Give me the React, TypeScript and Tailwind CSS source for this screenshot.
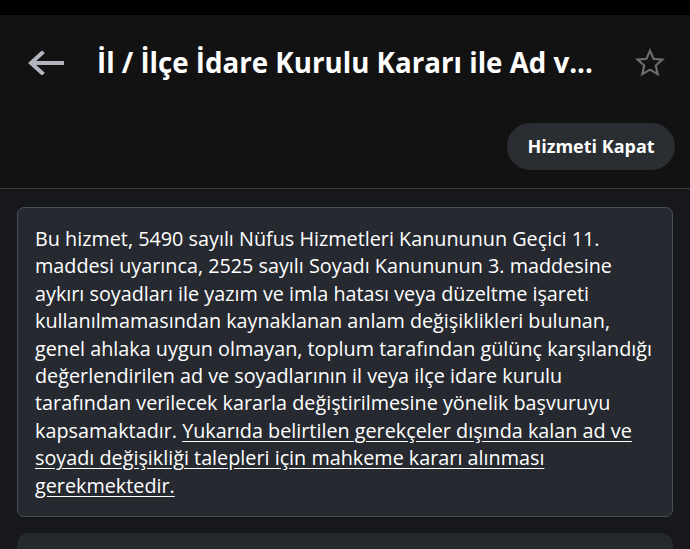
import React from "react";

const lines: { t: string; u?: string }[] = [
  { t: "Bu hizmet, 5490 sayılı Nüfus Hizmetleri Kanununun Geçici 11." },
  { t: "maddesi uyarınca, 2525 sayılı Soyadı Kanununun 3. maddesine" },
  { t: "aykırı soyadları ile yazım ve imla hatası veya düzeltme işareti" },
  { t: "kullanılmamasından kaynaklanan anlam değişiklikleri bulunan," },
  { t: "genel ahlaka uygun olmayan, toplum tarafından gülünç karşılandığı" },
  { t: "değerlendirilen ad ve soyadlarının il veya ilçe idare kurulu" },
  { t: "tarafından verilecek kararla değiştirilmesine yönelik başvuruyu" },
  { t: "kapsamaktadır. ", u: "Yukarıda belirtilen gerekçeler dışında kalan ad ve" },
  { t: "", u: "soyadı değişikliği talepleri için mahkeme kararı alınması" },
  { t: "", u: "gerekmektedir." },
];

export default function App() {
  return (
    <div
      className="w-[690px] h-[549px] overflow-hidden bg-[#17181c] flex flex-col"
      style={{ fontFamily: "'Open Sans', 'Noto Sans', sans-serif" }}
    >
      <div className="h-[15px] bg-black shrink-0" />
      <div className="h-[174px] bg-[#121212] border-b border-[#3c3c3e] shrink-0 flex flex-col">
        <div className="h-[64px] mt-[16px] flex items-center pl-[28px] pr-[24px]">
          <svg width="36" height="24" viewBox="0 0 36 24" className="shrink-0">
            <path
              d="M34 12 H4 M14 2 L3 12 L14 22"
              fill="none"
              stroke="#b2b5bf"
              strokeWidth="4"
              strokeLinecap="square"
            />
          </svg>
          <div className="ml-[33px] flex-1 text-[27.7px] font-bold text-white whitespace-nowrap">
            İl / İlçe İdare Kurulu Kararı ile Ad v...
          </div>
          <svg width="32" height="32" viewBox="0 0 24 24" className="shrink-0">
            <path
              d="M12 2.8l2.7 6.1 6.6.6-5 4.4 1.5 6.5L12 17l-5.8 3.4 1.5-6.5-5-4.4 6.6-.6z"
              fill="none"
              stroke="#6e6e70"
              strokeWidth="1.6"
              strokeLinejoin="miter"
            />
          </svg>
        </div>
        <div className="flex justify-end pr-[15px] mt-[28px]">
          <button className="h-[47px] w-[168px] rounded-full bg-[#2a2d32] text-white text-[18px] font-bold">
            Hizmeti Kapat
          </button>
        </div>
      </div>
      <div className="px-[17px] pt-[18px] flex flex-col gap-[16px]">
        <div className="rounded-[7px] border border-[#4a4e55] bg-[#262a30] pl-[17px] pr-[10px] pt-[17px] pb-[17px]">
          <p className="text-[19.8px] leading-[27.4px] text-white">
            {lines.map((l, i) => (
              <span key={i} className="block whitespace-nowrap">
                {l.t}
                {l.u && <span className="underline underline-offset-[3px]">{l.u}</span>}
              </span>
            ))}
          </p>
        </div>
        <div className="h-[40px] rounded-[12px] bg-[#25282d]" />
      </div>
    </div>
  );
}
